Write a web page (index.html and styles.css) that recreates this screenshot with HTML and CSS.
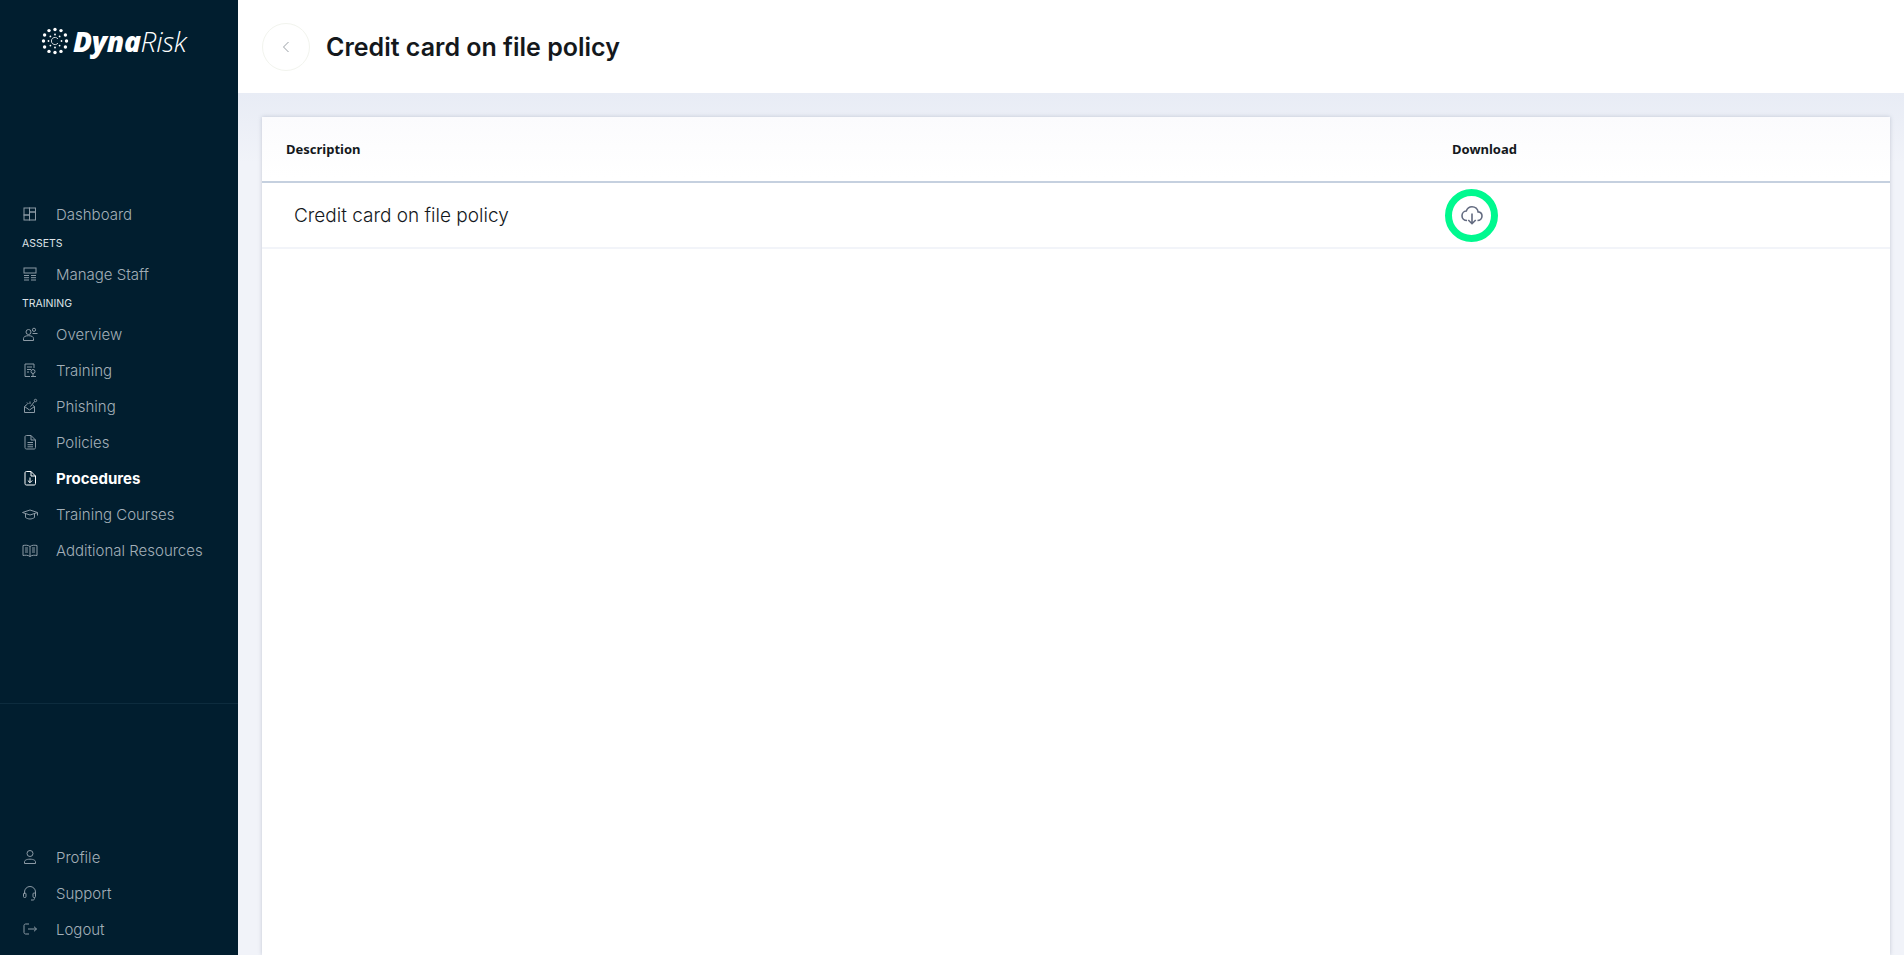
FILE: index.html
```html
<!DOCTYPE html>
<html lang="en">
<head>
<meta charset="UTF-8">
<title>Credit card on file policy</title>
<link rel="stylesheet" href="styles.css">
</head>
<body>
<aside class="sidebar">
    <div class="logo">
        <svg class="logo-mark" viewBox="0 0 28 28" width="28" height="28" fill="#fff">
            <circle cx="14" cy="2.5" r="1.7"/><circle cx="20" cy="3.6" r="1.7"/><circle cx="24.4" cy="8" r="1.7"/><circle cx="25.5" cy="14" r="1.7"/><circle cx="24.4" cy="20" r="1.7"/><circle cx="20" cy="24.4" r="1.7"/><circle cx="14" cy="25.5" r="1.7"/><circle cx="8" cy="24.4" r="1.7"/><circle cx="3.6" cy="20" r="1.7"/><circle cx="2.5" cy="14" r="1.7"/><circle cx="3.6" cy="8" r="1.7"/><circle cx="8" cy="3.6" r="1.7"/>
            <circle cx="14" cy="7.5" r=".9"/><circle cx="18.6" cy="9.4" r=".9"/><circle cx="20.5" cy="14" r=".9"/><circle cx="18.6" cy="18.6" r=".9"/><circle cx="14" cy="20.5" r=".9"/><circle cx="9.4" cy="18.6" r=".9"/><circle cx="7.5" cy="14" r=".9"/><circle cx="9.4" cy="9.4" r=".9"/>
            <path d="M17 12a3.6 3.6 0 1 0 0 4" fill="none" stroke="#fff" stroke-width=".8"/>
        </svg>
        <span class="logo-text"><b>Dyna</b>Risk</span>
    </div>

    <nav class="nav-main">
        <a class="nav-item" href="#">
            <svg viewBox="0 0 16 16"><rect x="2" y="2" width="5.5" height="7"/><rect x="2" y="9" width="5.5" height="5"/><rect x="7.5" y="2" width="6" height="4"/><rect x="7.5" y="6" width="6" height="8"/></svg>
            Dashboard
        </a>
        <div class="nav-label">ASSETS</div>
        <a class="nav-item" href="#">
            <svg viewBox="0 0 16 16"><rect x="2" y="2" width="12" height="5"/><path d="M2 9.5h5M9 9.5h5M2 11.7h5M9 11.7h5M2 14h5M9 14h5"/></svg>
            Manage Staff
        </a>
        <div class="nav-label">TRAINING</div>
        <a class="nav-item" href="#">
            <svg viewBox="0 0 16 16"><circle cx="6.5" cy="6" r="2.5"/><path d="M1.5 14.5v-2c0-1.5 1.5-2.8 5-2.8s5 1.3 5 2.8v2z"/><circle cx="12" cy="3.8" r="1.6"/><path d="M10.5 7.5h5"/></svg>
            Overview
        </a>
        <a class="nav-item" href="#">
            <svg viewBox="0 0 16 16"><path d="M12 6V2H3v12.5h5"/><path d="M5 5h5M5 7.5h4M5 10h2"/><circle cx="11" cy="9.5" r="2"/><path d="M9 14.5h5M11 11.5v3"/></svg>
            Training
        </a>
        <a class="nav-item" href="#">
            <svg viewBox="0 0 16 16"><path d="M2.500 8.500v6h10v-6l-5 3.500z"/><path d="M2.500 8.500l3-2.500M12.500 8.500l-2-1.500M5 4.500l1.500 1.500M8 3.500v2.500"/><path d="M8.500 8.500l4-5"/><circle cx="13.500" cy="2.500" r="1.200"/></svg>
            Phishing
        </a>
        <a class="nav-item" href="#">
            <svg viewBox="0 0 16 16"><path d="M3 3c0-1 .5-1.500 1.500-1.500H9L13.500 6v7.500c0 1-.5 1.500-1.500 1.500H4.500C3.500 15 3 14.500 3 13.500z"/><path d="M9 1.500V6h4.500M5.500 8.500h5.500M5.500 10.700h5.500M5.500 12.800h5.500"/></svg>
            Policies
        </a>
        <a class="nav-item active" href="#">
            <svg viewBox="0 0 16 16"><path d="M3 3c0-1 .5-1.500 1.500-1.500H9L13.500 6v7.500c0 1-.5 1.500-1.500 1.500H4.500C3.500 15 3 14.500 3 13.500z"/><path d="M9 1.500V6h4.500M8 7.500v5M5.800 10.500L8 12.700l2.200-2.200"/></svg>
            Procedures
        </a>
        <a class="nav-item" href="#">
            <svg viewBox="0 0 16 16" class="wide-icon"><path d="M.5 6.500L8 4l7.500 2.500L8 9z"/><path d="M3.500 8v3.500c1.500 1 3 1.500 4.500 1.500s3-.5 4.500-1.500V8"/><path d="M15.500 6.500v3"/></svg>
            Training Courses
        </a>
        <a class="nav-item" href="#">
            <svg viewBox="0 0 16 16" class="wide-icon"><path d="M8 4.500C6 3 3.500 3 1 3.500v10c2.500-.5 5-.5 7 1 2-1.500 4.500-1.500 7-1v-10C12.500 3 10 3 8 4.500zM8 4.500v10"/><path d="M3 6h3M3 8h3M3 10h3M10 6h3M10 8h3M10 10h3"/></svg>
            Additional Resources
        </a>
    </nav>

    <div class="nav-rule"></div>

    <nav class="nav-bottom">
        <a class="nav-item" href="#">
            <svg viewBox="0 0 16 16"><circle cx="8" cy="4.500" r="3"/><path d="M2.500 14.500v-1.500c0-1.500 1.500-2.800 5.500-2.800s5.500 1.300 5.500 2.800v1.500z"/></svg>
            Profile
        </a>
        <a class="nav-item" href="#">
            <svg viewBox="0 0 16 16"><path d="M2.500 9V7a5.500 5.500 0 0 1 11 0v2"/><rect x="1.500" y="8" width="2.500" height="4.500" rx="1"/><rect x="11" y="8" width="2.500" height="4.500" rx="1"/><path d="M12.500 12.500v1c0 1-.7 1.500-1.500 1.500H9"/></svg>
            Support
        </a>
        <a class="nav-item" href="#">
            <svg viewBox="0 0 16 16"><path d="M7 3H3.500C2.700 3 2 3.700 2 4.500v7c0 .8.700 1.500 1.500 1.500H7"/><path d="M6 8h8.500M12 5.700L14.500 8 12 10.300"/></svg>
            Logout
        </a>
    </nav>
</aside>

<main class="main">
    <header class="topbar">
        <button class="back-btn" type="button">
            <svg viewBox="0 0 12 16" width="12" height="16"><path d="M8.500 3L3.500 8l5 5"/></svg>
        </button>
        <h1>Credit card on file policy</h1>
    </header>

    <section class="content">
        <div class="card">
            <div class="row row-head">
                <div class="col-desc">Description</div>
                <div class="col-dl">Download</div>
            </div>
            <div class="row row-body">
                <div class="col-desc">Credit card on file policy</div>
                <div class="col-dl">
                    <a class="dl-ring" href="#">
                        <svg viewBox="0 0 24 24" width="24" height="24"><path d="M7 17.500C4 17.500 2 15.500 2 12.700c0-2.500 1.900-4.500 4.300-4.700C7.200 5.400 9.500 3.700 12 3.700c3.200 0 5.700 2.300 6.100 5.200 2.200.2 3.900 2 3.900 4.200 0 2.400-1.800 4.400-4.500 4.400"/><path d="M12 10.500v10M8.300 17l3.700 3.700 3.700-3.700"/></svg>
                    </a>
                </div>
            </div>
        </div>
    </section>
</main>
</body>
</html>
```

FILE: styles.css
```css
* {
    box-sizing: border-box;
}
html, body {
    height: 100%;
}
body {
    margin: 0;
    display: flex;
    overflow: hidden;
    background: #f0f2f8;
    font-family: Inter, "Noto Sans", sans-serif;
}
a {
    text-decoration: none;
}

/* sidebar */
.sidebar {
    width: 238px;
    height: 955px;
    flex: none;
    background: #011e2f;
    display: flex;
    flex-direction: column;
}
.logo {
    height: 196px;
    padding: 27px 0 0 41px;
    display: flex;
    align-items: flex-start;
    gap: 4px;
}
.logo-mark {
    margin-top: 0;
}
.logo-text {
    font-family: "Open Sans", sans-serif;
    font-style: italic;
    font-weight: 300;
    font-size: 28px;
    line-height: 28px;
    color: #fff;
    letter-spacing: -0.3px;
}
.logo-text b {
    font-weight: 800;
}
.nav-item {
    height: 36px;
    display: flex;
    align-items: center;
    padding-left: 22px;
    font-size: 15px;
    font-weight: 300;
    color: #a3afb8;
}
.nav-item svg {
    width: 16px;
    height: 16px;
    margin-right: 18px;
    flex: none;
    fill: none;
    stroke: #8c9aa5;
    stroke-width: 1;
}
.nav-item.active {
    color: #fff;
    font-weight: 700;
}
.nav-item.active svg {
    stroke: #fff;
}
.nav-label {
    height: 24px;
    padding-left: 22px;
    font-size: 10.500px;
    line-height: 24px;
    color: #dfe4e8;
}
.nav-rule {
    height: 1px;
    margin-top: 135px;
    background: #0d2c3e;
}
.nav-bottom {
    margin-top: 135px;
}

/* main area */
.main {
    flex: 1;
    min-width: 0;
    display: flex;
    flex-direction: column;
}
.topbar {
    height: 93px;
    flex: none;
    background: #fff;
    padding-left: 24px;
    display: flex;
    align-items: center;
    gap: 16px;
}
.back-btn {
    width: 48px;
    height: 48px;
    padding: 0;
    border: 1px solid #f2f4ee;
    border-radius: 50%;
    background: #fff;
    display: flex;
    align-items: center;
    justify-content: center;
}
.back-btn svg {
    fill: none;
    stroke: #9aa0a6;
    stroke-width: 1;
}
.topbar h1 {
    margin: 0;
    font-size: 25px;
    font-weight: 600;
    color: #14181c;
}
.content {
    flex: 1;
    padding: 24px 14px 0 24px;
    background: linear-gradient(#e8ecf5, #f1f3f9 70px);
}
.card {
    height: 100%;
    background: linear-gradient(#fbfbfd, #fff 60px);
    box-shadow: 0 0 4px rgba(90, 100, 130, .3);
}
.row {
    display: flex;
}
.row-head {
    height: 66px;
    align-items: center;
    border-bottom: 2px solid #c5d0df;
    font-family: "Noto Sans", sans-serif;
    font-size: 13px;
    font-weight: 700;
    color: #14181c;
}
.row-head .col-desc {
    padding-left: 24px;
}
.row-body {
    height: 66px;
    align-items: center;
    border-bottom: 2px solid #f2f4f9;
    font-size: 19px;
    font-weight: 300;
    color: #14181c;
}
.row-body .col-desc {
    padding-left: 32px;
}
.col-desc {
    width: 1190px;
}
.dl-ring {
    width: 53px;
    height: 53px;
    margin-left: -7px;
    border: 7px solid #00f98f;
    border-radius: 50%;
    display: flex;
    align-items: center;
    justify-content: center;
}
.dl-ring svg {
    fill: none;
    stroke: #636b80;
    stroke-width: 1.600;
}
```
